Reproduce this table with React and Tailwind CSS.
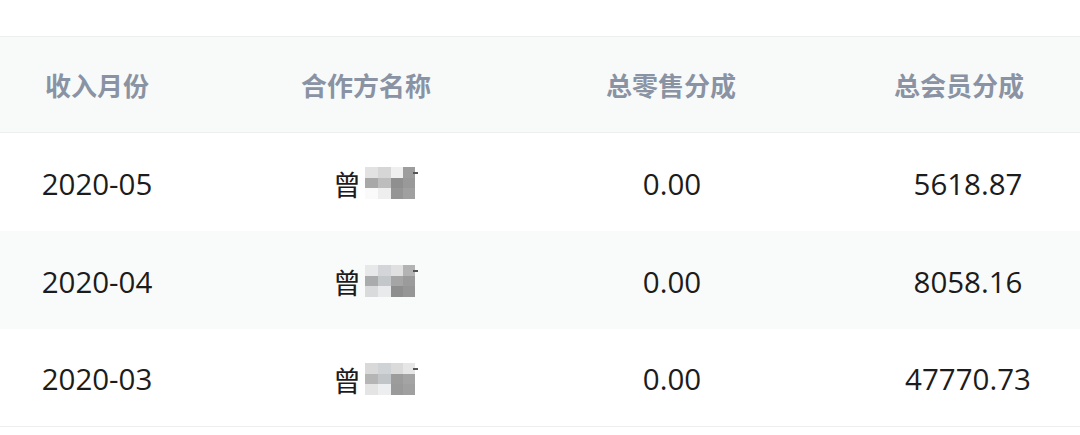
import React from "react";

const rows = [
  { month: "2020-05", retail: "0.00", member: "5618.87", bg: "bg-white", mosaic: ["#e2e2e2","#d6d6d6","#efefef","#9d9d9d","#a8a8a8","#bdbdbd","#8f8f8f","#999999","#fafafa","#eeeeee","#959595","#a0a0a0"] },
  { month: "2020-04", retail: "0.00", member: "8058.16", bg: "bg-[#f9fbfb]", mosaic: ["#e6e8ea","#d3d5d8","#e0e0e0","#b3b3b3","#a9abad","#c4c7ca","#a5a5a5","#9b9b9b","#d8dadc","#e8eaec","#8e8e8e","#969696"] },
  { month: "2020-03", retail: "0.00", member: "47770.73", bg: "bg-white", mosaic: ["#d9d9d9","#d0d3d6","#dadada","#e6e6e6","#b5b5b5","#c2c5c8","#9c9c9c","#a4a4a4","#e4e4e4","#eceef0","#9a9a9a","#a0a0a0"] },
];

function Mosaic({ colors }) {
  return (
    <div className="relative ml-[4px] -mt-[2px]">
      <div className="grid grid-cols-[13px_13px_12px_12px] grid-rows-[11px_10px_11px]">
        {colors.map((c, i) => (
          <div key={i} style={{ backgroundColor: c }} />
        ))}
      </div>
      <div className="absolute right-[-3px] top-[5px] w-[5px] h-[2px] bg-[#555]" />
    </div>
  );
}

export default function App() {
  const font = { fontFamily: '"Open Sans", "Noto Sans CJK SC", sans-serif' };
  return (
    <div className="w-[1080px] h-[435px] bg-white overflow-hidden" style={font}>
      <div className="h-[36px]" />
      <div className="w-[1132px]">
        <div className="grid grid-cols-[194px_352px_250px_336px] h-[97px] items-center bg-[#f8fafa] border-y border-[#eceef0] text-[26px] font-bold text-[#8a93a3]" style={{ fontFamily: '"Noto Sans CJK SC", sans-serif' }}>
          <div className="text-center">收入月份</div>
          <div className="text-center pr-[8px]">合作方名称</div>
          <div className="text-center">总零售分成</div>
          <div className="text-center pr-[10px]">总会员分成</div>
        </div>
        {rows.map((r, i) => (
          <div key={i} className={`grid grid-cols-[194px_352px_250px_336px] h-[98px] items-center pt-[4px] text-[29.5px] text-[#1c1c1c] ${r.bg} ${i === rows.length - 1 ? "border-b border-[#eceef0]" : ""}`}>
            <div className="text-center">{r.month}</div>
            <div className="flex items-center justify-center pl-[8px]">
              <span className="text-[28px]" style={{ fontFamily: '"Noto Sans CJK SC", sans-serif' }}>曾</span>
              <Mosaic colors={r.mosaic} />
            </div>
            <div className="text-center pl-[2px]">{r.retail}</div>
            <div className="text-center pl-[8px]">{r.member}</div>
          </div>
        ))}
      </div>
    </div>
  );
}
